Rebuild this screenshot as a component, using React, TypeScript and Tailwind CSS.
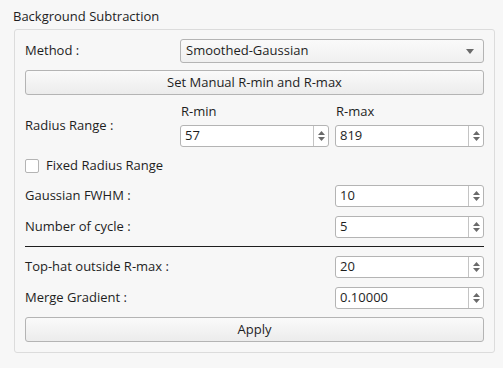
import React from "react";

function SpinBox({ value, className = "" }: { value: string; className?: string }) {
  return (
    <div
      className={`flex h-[22px] rounded-[3px] border border-[#b4b4b4] bg-white ${className}`}
    >
      <div className="flex flex-1 items-center pl-[4px] text-[13px] text-[#1e1e1e]">{value}</div>
      <div className="flex w-[15px] flex-col items-center justify-center gap-[2px] border-l border-[#c4c4c4]">
        <svg width="7" height="4" viewBox="0 0 7 4">
          <path d="M0 4 L3.5 0 L7 4 Z" fill="#6a6a6a" />
        </svg>
        <svg width="7" height="4" viewBox="0 0 7 4">
          <path d="M0 0 L3.5 4 L7 0 Z" fill="#6a6a6a" />
        </svg>
      </div>
    </div>
  );
}

function Button({ label }: { label: string }) {
  return (
    <div className="flex h-[25px] items-center justify-center rounded-[3px] border border-[#b4b4b4] bg-gradient-to-b from-[#fafafa] to-[#ececec] text-[13px] text-[#1e1e1e]">
      {label}
    </div>
  );
}

export default function App() {
  return (
    <div
      className="h-[368px] w-[503px] bg-[#f7f7f7] pt-[8px] text-[#1e1e1e]"
      style={{ fontFamily: '"Open Sans", "Noto Sans", sans-serif' }}
    >
      <div className="ml-[13px] text-[13px] leading-[17px]">Background Subtraction</div>

      <div className="ml-[14px] mt-[4px] w-[481px] rounded-[3px] border border-[#dcdcdc] px-[10px] pb-[10px] pt-[9px]">
        {/* Method */}
        <div className="flex items-center">
          <div className="w-[155px] text-[13px]">Method :</div>
          <div className="flex h-[24px] flex-1 items-center justify-between rounded-[3px] border border-[#b4b4b4] bg-gradient-to-b from-[#fafafa] to-[#f0f0f0] pl-[5px] pr-[9px] text-[13px]">
            <span>Smoothed-Gaussian</span>
            <svg width="8" height="5" viewBox="0 0 8 5">
              <path d="M0 0 L4 5 L8 0 Z" fill="#6a6a6a" />
            </svg>
          </div>
        </div>

        <div className="mt-[7px]">
          <Button label="Set Manual R-min and R-max" />
        </div>

        {/* Radius Range */}
        <div className="mt-[4px] flex items-center">
          <div className="w-[155px] pt-[6px] text-[13px]">Radius Range :</div>
          <div className="grid flex-1 grid-cols-2 gap-x-[6px]">
            <div className="h-[26px] pl-[1px] pt-[3px] text-[13px]">R-min</div>
            <div className="h-[26px] pl-[1px] pt-[3px] text-[13px]">R-max</div>
            <SpinBox value="57" />
            <SpinBox value="819" />
          </div>
        </div>

        {/* Fixed Radius Range */}
        <div className="mt-[12px] flex h-[14px] items-center gap-[7px]">
          <div className="h-[14px] w-[14px] rounded-[2px] border border-[#b4b4b4] bg-white" />
          <span className="text-[13px]">Fixed Radius Range</span>
        </div>

        <div className="mt-[12px] flex items-center">
          <div className="flex-1 text-[13px]">Gaussian FWHM :</div>
          <SpinBox value="10" className="w-[149px]" />
        </div>

        <div className="mt-[9px] flex items-center">
          <div className="flex-1 text-[13px]">Number of cycle :</div>
          <SpinBox value="5" className="w-[149px]" />
        </div>

        <div className="mt-[8px] h-[1px] bg-[#1e1e1e]" />

        <div className="mt-[9px] flex items-center">
          <div className="flex-1 text-[13px]">Top-hat outside R-max :</div>
          <SpinBox value="20" className="w-[149px]" />
        </div>

        <div className="mt-[9px] flex items-center">
          <div className="flex-1 text-[13px]">Merge Gradient :</div>
          <SpinBox value="0.10000" className="w-[149px]" />
        </div>

        <div className="mt-[8px]">
          <Button label="Apply" />
        </div>
      </div>
    </div>
  );
}
